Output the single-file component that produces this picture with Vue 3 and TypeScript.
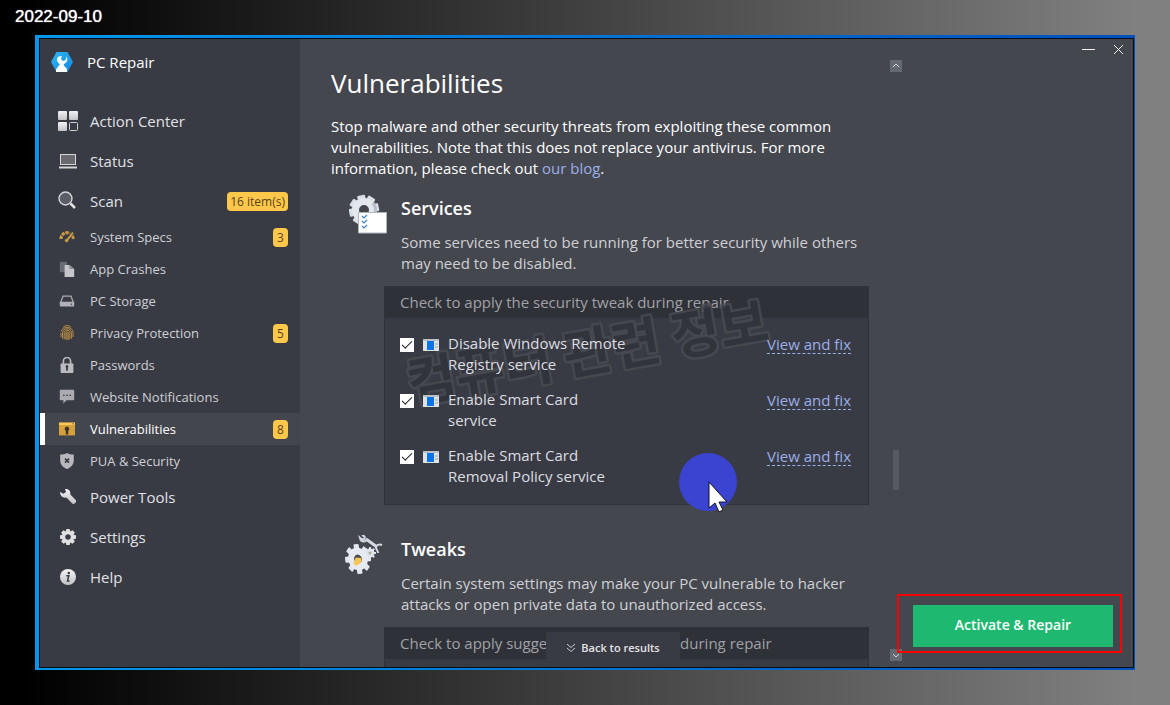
<script setup lang="ts">
import { ref } from 'vue'

interface NavItem {
  label: string
  icon: string
  small?: boolean
  badge?: string
}

interface Service {
  id: string
  lines: [string, string]
  checked: boolean
}

const navItems: NavItem[] = [
  { label: 'Action Center', icon: 'grid' },
  { label: 'Status', icon: 'laptop' },
  { label: 'Scan', icon: 'search', badge: '16 item(s)' },
  { label: 'System Specs', icon: 'gauge', small: true, badge: '3' },
  { label: 'App Crashes', icon: 'files', small: true },
  { label: 'PC Storage', icon: 'drive', small: true },
  { label: 'Privacy Protection', icon: 'finger', small: true, badge: '5' },
  { label: 'Passwords', icon: 'lock', small: true },
  { label: 'Website Notifications', icon: 'chat', small: true },
  { label: 'Vulnerabilities', icon: 'vuln', small: true, badge: '8' },
  { label: 'PUA & Security', icon: 'shield', small: true },
  { label: 'Power Tools', icon: 'wrench' },
  { label: 'Settings', icon: 'gear' },
  { label: 'Help', icon: 'info' },
]

const active = ref('Vulnerabilities')

const services = ref<Service[]>([
  { id: 'registry', lines: ['Disable Windows Remote', 'Registry service'], checked: true },
  { id: 'card', lines: ['Enable Smart Card', 'service'], checked: true },
  { id: 'policy', lines: ['Enable Smart Card', 'Removal Policy service'], checked: true },
])

const teeth = [0, 45, 90, 135, 180, 225, 270, 315]
</script>

<template>
  <div class="desktop">
    <header class="date">2022-09-10</header>

    <div class="frame">
      <div class="window">
        <aside class="sidebar">
          <div class="brand">
            <svg class="logo" viewBox="0 0 22 22" aria-hidden="true">
              <defs>
                <linearGradient id="hex" x1="0" y1="0" x2="1" y2="1">
                  <stop offset="0" stop-color="#2cb8f6" />
                  <stop offset="1" stop-color="#1686e2" />
                </linearGradient>
              </defs>
              <path d="M5.500 1h11L22 11l-5.500 10h-11L0 11z" fill="url(#hex)" />
              <path d="M7.500 5.500C5 8 6 12 9 13l-4 5.500V21h11v-3l-3.200-3.500V13c3.200-1 4.500-4.500 2.700-7.500l-.8 3.500-2.700 1-2-1.800.8-3.200z" fill="#fff" />
            </svg>
            <span>PC Repair</span>
          </div>

          <nav aria-label="Main">
            <a
              v-for="item in navItems"
              :key="item.label"
              href="#"
              class="nav-item"
              :class="{ small: item.small, active: item.label === active }"
              @click.prevent="active = item.label"
            >
              <svg class="nav-icon" viewBox="0 0 20 20" aria-hidden="true">
                <defs>
                  <linearGradient id="metal" x1="0" y1="0" x2="0" y2="1">
                    <stop offset="0" stop-color="#f3f3f4" />
                    <stop offset="1" stop-color="#c0c2c7" />
                  </linearGradient>
                </defs>
                <g v-if="item.icon === 'grid'">
                  <rect x="0" y="0" width="9" height="9" rx="1" fill="url(#metal)" />
                  <rect x="11" y="0" width="9" height="9" rx="1" fill="url(#metal)" />
                  <rect x="0" y="11" width="9" height="9" rx="1" fill="url(#metal)" />
                  <rect x="11.500" y="11.500" width="8" height="8" rx="1" fill="none" stroke="#d0d1d4" />
                </g>
                <g v-else-if="item.icon === 'laptop'">
                  <rect x="2.500" y="3.500" width="15" height="10" fill="#686a70" stroke="#d5d6d9" />
                  <path d="M1 16.500h18" stroke="#d5d6d9" stroke-width="2" />
                </g>
                <g v-else-if="item.icon === 'search'">
                  <circle cx="7.500" cy="7.500" r="6.500" fill="#5b5e66" stroke="#d5d6d9" stroke-width="1.400" />
                  <path d="m12.500 12.500 4.500 4.500" stroke="#e3e3e5" stroke-width="2.500" />
                </g>
                <g v-else-if="item.icon === 'gauge'" fill="none" stroke="#c99b45">
                  <path d="M2.500 12.500a7.500 7.500 0 0 1 11-7" stroke-width="4" stroke-dasharray="4 1" />
                  <path d="M17 8.500a7 7 0 0 1 .5 4" stroke-width="3.500" />
                  <path d="m9.500 14.500 8-10" stroke-width="2.400" />
                  <circle cx="9.500" cy="14.500" r="2.200" fill="#c99b45" stroke="none" />
                </g>
                <g v-else-if="item.icon === 'files'">
                  <path d="M1 1h9v13H1z" fill="#686b73" />
                  <path d="M7 5h6l6 5v10H7z" fill="#c5c6ca" />
                  <path d="M13 5v5h6z" fill="#8d9097" />
                </g>
                <g v-else-if="item.icon === 'drive'">
                  <path d="m5 4-3 8h16l-3-8z" fill="none" stroke="#a9abb1" stroke-width="1.600" />
                  <rect x="1" y="11" width="18" height="6" rx="1" fill="#b0b2b7" />
                  <circle cx="15.500" cy="14" r="1" fill="#44464e" />
                </g>
                <g v-else-if="item.icon === 'finger'" fill="none" stroke="#bd9143" stroke-width="1.200">
                  <path d="M5 3c3-3 7-3 10 0M2.500 8C4.500 1.500 15.500 1.500 17.500 8v7M2.500 10v5M4.500 17v-7c0-7 11-7 11 0v7M6.500 18v-8c0-4.500 7-4.500 7 0v8M8.500 18v-8c0-2 3-2 3 0v8.500M10 10v9" />
                </g>
                <g v-else-if="item.icon === 'lock'">
                  <path d="M5.500 9V5a4.500 4.500 0 0 1 9 0v4" fill="none" stroke="#b9bbc0" stroke-width="2" />
                  <rect x="2" y="8" width="16" height="12" rx="1" fill="#b9bbc0" />
                  <path d="M10 10a2 2 0 0 1 1 3.500l.4 3.500H8.600l.4-3.500a2 2 0 0 1 1-3.500" fill="#393b44" />
                </g>
                <g v-else-if="item.icon === 'chat'">
                  <path d="M2 1h16a1 1 0 0 1 1 1v11a1 1 0 0 1-1 1H9.500L5.500 18v-4H2a1 1 0 0 1-1-1V2a1 1 0 0 1 1-1" fill="#a9abb0" />
                  <path d="M5 8h2m2 0h2m2 0h2" stroke="#3d3f47" stroke-width="1.800" />
                </g>
                <g v-else-if="item.icon === 'vuln'">
                  <path d="M0 2h20v16H0z" fill="#d6a03c" />
                  <path d="M0 2h20v3H0z" fill="#fbc859" />
                  <path d="M16.500 3.500h2" stroke="#5b4522" />
                  <path d="M10 7a3 3 0 0 1 1.500 5.500V17h-3v-4.500A3 3 0 0 1 10 7" fill="#3f3424" />
                </g>
                <g v-else-if="item.icon === 'shield'">
                  <path d="M10 0c2.500 1.500 5 2 8.500 2v7c0 5.500-3.500 9-8.500 11-5-2-8.500-5.500-8.500-11V2C5 2 7.500 1.500 10 0" fill="#b6b8bd" />
                  <path d="m7.500 7 5 5m0-5-5 5" stroke="#393b44" stroke-width="2" />
                </g>
                <g v-else-if="item.icon === 'wrench'">
                  <path d="m2 5 3.500 1.700L8 5 7 2c3.500-.6 6 2 5.300 5.500l5.400 5.500c1.600 1.600-1.500 5.300-3.500 3.500L8.500 10.500C5.300 11.500 2 9 2 5" fill="url(#metal)" />
                </g>
                <g v-else-if="item.icon === 'gear'">
                  <rect v-for="a in teeth" :key="a" x="8" y="2" width="4" height="5" rx="1" fill="#dedfe1" :transform="`rotate(${a} 10 10)`" />
                  <circle cx="10" cy="10" r="4.500" fill="none" stroke="#dedfe1" stroke-width="3.400" />
                </g>
                <g v-else>
                  <circle cx="10" cy="10" r="8" fill="url(#metal)" />
                  <circle cx="10.800" cy="6" r="1.200" fill="#393b44" />
                  <path d="M8.300 8.800h2.500L9.500 14h2" fill="none" stroke="#393b44" stroke-width="1.500" />
                </g>
              </svg>
              <span class="nav-label">{{ item.label }}</span>
              <span v-if="item.badge" class="badge">{{ item.badge }}</span>
            </a>
          </nav>
        </aside>

        <main class="main">
          <div class="content">
            <h1>Vulnerabilities</h1>
            <p class="intro">
              Stop malware and other security threats from exploiting these common<br />
              vulnerabilities. Note that this does not replace your antivirus. For more<br />
              information, please check out <a href="#">our blog</a>.
            </p>

            <section class="section">
              <svg class="section-icon" viewBox="0 0 40 40" aria-hidden="true">
                <g transform="translate(15 16)">
                  <rect v-for="a in teeth" :key="a" x="-4" y="-15" width="8" height="9" rx="1" fill="#d9dfe6" :transform="`rotate(${a - 12})`" />
                  <circle r="8.500" fill="none" stroke="#e3e8ee" stroke-width="7" />
                  <path d="M8 10c4-4 5-12 1-17" fill="none" stroke="#b7c0ca" stroke-width="3" />
                </g>
                <path d="M9.500 18.500h28V39h-28z" fill="#fff" stroke="#aeb4bc" />
                <path d="m13 22 2 2 3-3m-5 6 2 2 3-3m-5 6 2 2 3-3" fill="none" stroke="#3d82c4" stroke-width="1.200" />
              </svg>
              <div class="section-head">
                <h2>Services</h2>
                <p>Some services need to be running for better security while others<br />may need to be disabled.</p>
              </div>

              <div class="panel">
                <div class="panel-title">Check to apply the security tweak during repair</div>
                <ul class="rows">
                  <li v-for="s in services" :key="s.id" class="row">
                    <input :id="s.id" v-model="s.checked" type="checkbox" />
                    <svg class="service-icon" viewBox="0 0 16 12" aria-hidden="true">
                      <path d="M0 0h16v12H0z" fill="#dfe3e6" />
                      <path d="M0 0h16v2H0z" fill="#b9c0c6" />
                      <path d="M12 5h3m-3 3h3" stroke="#9ba4ab" />
                      <path d="M4 2h7v9H4z" fill="#0a74e8" />
                    </svg>
                    <label :for="s.id">{{ s.lines[0] }}<br />{{ s.lines[1] }}</label>
                    <a href="#" class="fix">View and fix</a>
                  </li>
                </ul>
              </div>
            </section>

            <section class="section">
              <svg class="section-icon" viewBox="0 0 40 40" aria-hidden="true">
                <g fill="none" stroke="#d3d9e3">
                  <path d="m21 4 11 8" stroke-width="3" />
                  <path d="M17 0c2 1 4 2 2 4-2 1-3 0-4-1 1 4 5 5 7 1" stroke-width="2" />
                  <path d="M37 10c-3-1-6 0-6 2 0 3 2 3 2 6" stroke-width="2" />
                </g>
                <g transform="translate(25 18)">
                  <rect v-for="a in teeth" :key="a" x="-1" y="-6" width="2" height="3" fill="#dfe5eb" :transform="`rotate(${a})`" />
                  <circle r="3" fill="#b3ad93" stroke="#dfe5eb" stroke-width="3" />
                </g>
                <g transform="translate(13 24) rotate(-18) scale(.85 1)">
                  <rect v-for="a in teeth" :key="a" x="-3" y="-15" width="6" height="7" rx="1" fill="#e2e7ee" :transform="`rotate(${a + 12})`" />
                  <circle r="8" fill="#4a4a4c" stroke="#e7ebf1" stroke-width="7" />
                  <path d="m-7 3 5-5 6 2-1 4-7 2z" fill="#f6c557" />
                </g>
              </svg>
              <div class="section-head">
                <h2>Tweaks</h2>
                <p>Certain system settings may make your PC vulnerable to hacker<br />attacks or open private data to unauthorized access.</p>
              </div>
              <div class="panel">
                <div class="panel-title">Check to apply suggested system tweak during repair</div>
                <div class="rows"></div>
              </div>
            </section>

            <button type="button" class="back">
              <svg viewBox="0 0 10 10" aria-hidden="true">
                <path d="m1 1 4 3.500L9 1M1 5l4 3.500L9 5" fill="none" stroke="#c9cace" />
              </svg>
              Back to results
            </button>

            <svg class="watermark" viewBox="0 0 390 140" aria-hidden="true">
              <text x="12" y="118" transform="rotate(-10 12 118)">컴퓨터 관련 정보</text>
            </svg>

            <div class="pointer" aria-hidden="true">
              <svg viewBox="0 0 20 32">
                <path d="M1 1v26l6-5 4 9 4-2-4-8h8z" fill="#fff" stroke="#10131c" />
              </svg>
            </div>
          </div>

          <div class="scrollbar">
            <button type="button" aria-label="Scroll up">
              <svg viewBox="0 0 12 12"><path d="m3 7 3-3 3 3" /></svg>
            </button>
            <div class="track"><div class="thumb"></div></div>
            <button type="button" aria-label="Scroll down">
              <svg viewBox="0 0 12 12"><path d="m3 5 3 3 3-3" /></svg>
            </button>
          </div>

          <div class="side">
            <div class="controls">
              <button type="button" aria-label="Minimize">
                <svg viewBox="0 0 14 14"><path d="M0 7.500h13" /></svg>
              </button>
              <button type="button" aria-label="Close">
                <svg viewBox="0 0 14 14"><path d="m2 3 9 9m0-9-9 9" /></svg>
              </button>
            </div>
            <div class="highlight">
              <button type="button" class="repair">Activate &amp; Repair</button>
            </div>
          </div>
        </main>
      </div>
    </div>
  </div>
</template>

<style>
body {
  margin: 0;
  background: #000;
}
</style>

<style scoped>
* {
  box-sizing: border-box;
}

.desktop {
  height: 100vh;
  display: grid;
  grid-template-rows: 35px minmax(0, 1fr);
  padding: 0 35px 35px;
  background: linear-gradient(90deg, #000 2%, #808080 97%);
  color: #fff;
  font-family: 'Open Sans', 'Noto Sans', sans-serif;
  font-size: 15px;
  line-height: 21px;
}

.date {
  margin-left: -20px;
  padding-top: 6px;
  font-family: 'Liberation Sans', Arial, sans-serif;
  font-size: 17px;
  text-shadow: 0 0 1px #fff;
}

.frame {
  padding: 3px 1px 2px 4px;
  background: linear-gradient(90deg, #0098ea, #0050bb);
  min-height: 0;
}

.window {
  height: 100%;
  display: grid;
  grid-template-columns: 260px minmax(0, 1fr);
  border: 1px solid #080b18;
  background: #45474f;
  overflow: hidden;
}

.sidebar {
  background: #393b44;
}

.brand {
  display: flex;
  align-items: center;
  gap: 14px;
  height: 46px;
  margin-bottom: 16px;
  padding-left: 11px;
}

.logo {
  width: 22px;
  height: 22px;
}

.nav-item {
  display: flex;
  align-items: center;
  height: 40px;
  padding: 0 12px 0 18px;
  color: #e0e1e4;
  text-decoration: none;
}

.nav-item.small {
  height: 32px;
  font-size: 13px;
  color: #ced0d5;
}

.nav-icon {
  width: 20px;
  height: 20px;
  margin-right: 12px;
}

.nav-item.small .nav-icon {
  width: 16px;
  height: 16px;
  margin: 0 15px 0 1px;
}

.nav-item.small.active {
  background: #44464e;
  border-left: 5px solid #fff;
  padding-left: 13px;
  color: #fff;
}

.nav-label {
  flex: 1;
}

.badge {
  min-width: 15px;
  padding: 0 3px;
  border-radius: 4px;
  background: #ffc84b;
  color: #59421b;
  font-size: 12px;
  line-height: 19px;
  text-align: center;
}

.main {
  display: grid;
  grid-template-columns: minmax(0, 1fr) 12px 231px;
  min-height: 0;
}

.content {
  position: relative;
  min-height: 0;
  overflow: hidden;
  padding: 22px 21px 0 31px;
}

h1 {
  margin: 0;
  font-size: 26px;
  font-weight: 400;
  line-height: 44px;
}

.intro {
  margin: 11px 0 0;
}

a {
  color: #9aaee8;
  text-decoration: none;
}

.section {
  display: grid;
  grid-template-columns: 70px minmax(0, 1fr);
  margin-top: 17px;
}

.section + .section {
  margin-top: 32px;
}

.section-icon {
  width: 40px;
  height: 40px;
  margin: -2px 0 0 18px;
}

.section + .section .section-icon {
  margin-left: 14px;
}

h2 {
  margin: 0;
  font-size: 18px;
  font-weight: 600;
  line-height: 24px;
}

.section-head p {
  margin: 12px 0;
  color: #cfd0d4;
}

.panel {
  grid-column: 1 / -1;
  margin-left: 53px;
  border: 1px solid #30323a;
  background: #393b44;
}

.panel-title {
  padding: 5px 15px;
  background: #2f3138;
  color: #a0a1a6;
}

.rows {
  margin: 0;
  padding: 15px 17px 3px 15px;
  list-style: none;
}

.row {
  position: relative;
  z-index: 1;
  display: grid;
  grid-template-columns: 14px 16px minmax(0, 1fr) auto;
  align-items: start;
  column-gap: 9px;
  height: 56px;
  color: #dcdde0;
}

input {
  appearance: none;
  display: grid;
  place-items: center;
  width: 14px;
  height: 14px;
  margin: 5px 0 0;
  background: #fff;
}

input:checked::before {
  content: '';
  width: 9px;
  height: 4px;
  margin-bottom: 3px;
  border-left: 1px solid #25272d;
  border-bottom: 1px solid #25272d;
  transform: rotate(-45deg);
}

.service-icon {
  width: 16px;
  height: 12px;
  margin-top: 6px;
}

.fix {
  margin-top: 2px;
  line-height: 18px;
  border-bottom: 1px dashed #9aaee8;
}

.back {
  position: absolute;
  left: 50%;
  bottom: 4px;
  display: flex;
  align-items: center;
  justify-content: center;
  gap: 5px;
  width: 134px;
  height: 31px;
  margin-left: -49px;
  padding: 0;
  border: 0;
  background: #393b44;
  color: #e3e3e6;
  font: 600 11px 'Open Sans', 'Noto Sans', sans-serif;
}

.back svg {
  width: 10px;
  height: 10px;
}

.watermark {
  position: absolute;
  left: 99px;
  top: 246px;
  width: 390px;
  height: 140px;
  pointer-events: none;
}

.watermark text {
  font-family: 'Noto Sans CJK KR', sans-serif;
  font-size: 53px;
  font-weight: 700;
  fill: #31333b;
  stroke: #4a4c54;
  stroke-width: 5px;
  stroke-linejoin: round;
  paint-order: stroke;
  opacity: 0.8;
}

.pointer {
  position: absolute;
  z-index: 2;
  left: 379px;
  top: 414px;
  width: 58px;
  height: 58px;
  border-radius: 50%;
  background: #3b43d1;
}

.pointer svg {
  position: absolute;
  left: 29px;
  top: 28px;
  width: 20px;
  height: 32px;
}

.scrollbar {
  display: flex;
  flex-direction: column;
  padding: 21px 0 6px;
}

.scrollbar button {
  width: 12px;
  height: 12px;
  padding: 0;
  border: 0;
  background: #656972;
}

.scrollbar svg {
  display: block;
  fill: none;
  stroke: #d6d8dd;
}

.track {
  flex: 1;
  display: flex;
  flex-direction: column;
  align-items: center;
}

.thumb {
  width: 6px;
  height: 40px;
  margin-top: 378px;
  background: #575960;
}

.side {
  display: flex;
  flex-direction: column;
  justify-content: space-between;
  align-items: flex-end;
  margin-left: -6px;
  padding: 0 11px 14px 0;
}

.controls {
  display: flex;
  gap: 16px;
  margin-right: -4px;
}

.controls button {
  height: 20px;
  width: 14px;
  padding: 3px 0;
  border: 0;
  background: none;
}

.controls svg {
  display: block;
  width: 14px;
  height: 14px;
  fill: none;
  stroke: #f2f2f3;
}

.highlight {
  width: 225px;
  padding: 9px 7px 4px 14px;
  border: 2px solid #f80000;
}

.repair {
  display: block;
  width: 100%;
  height: 42px;
  padding: 0 0 4px;
  border: 0;
  background: #1eb871;
  color: #fff;
  font: 600 14px 'Open Sans', 'Noto Sans', sans-serif;
}
</style>
